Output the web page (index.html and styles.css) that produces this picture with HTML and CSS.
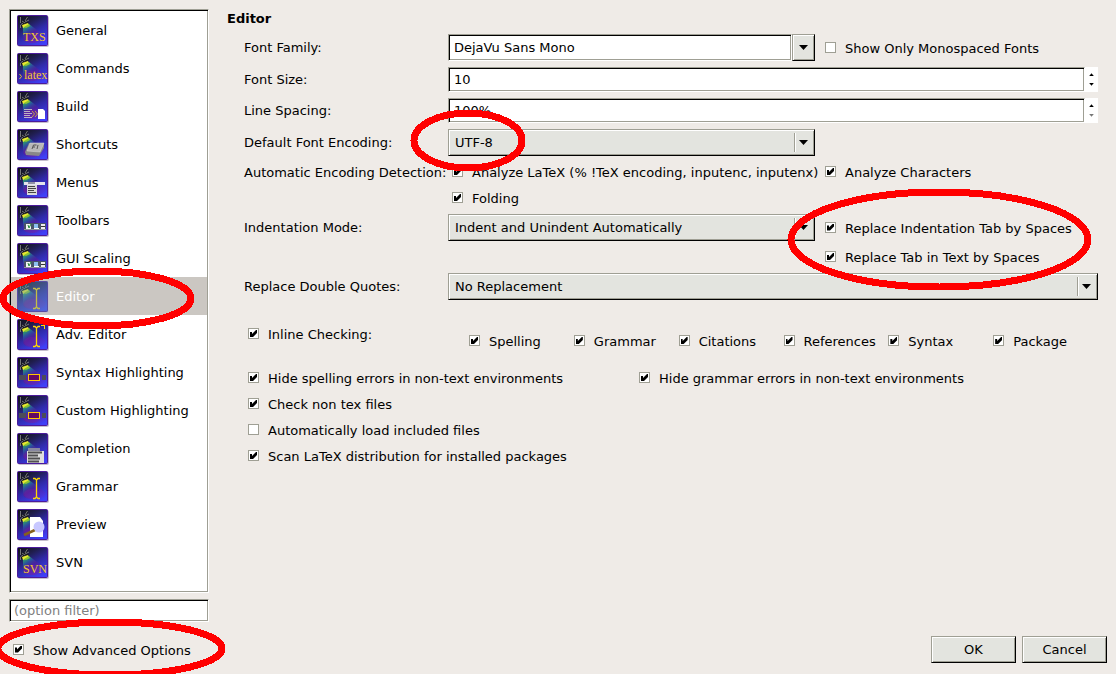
FILE: index.html
```html
<!DOCTYPE html>
<html lang="en">
<head>
<meta charset="utf-8">
<title>Configure Editor</title>
<link rel="stylesheet" href="styles.css">
</head>
<body>
<svg class="defs" aria-hidden="true">
  <defs>
    <linearGradient id="night" x1="0.2" y1="0" x2="0.75" y2="1">
      <stop offset="0" stop-color="#141420"/>
      <stop offset="0.25" stop-color="#201e50"/>
      <stop offset="0.55" stop-color="#2f2aa8"/>
      <stop offset="1" stop-color="#4040f8"/>
    </linearGradient>
    <linearGradient id="beam" x1="0" y1="0" x2="0.8" y2="1">
      <stop offset="0" stop-color="#d8e820"/>
      <stop offset="0.14" stop-color="#2e9a68"/>
      <stop offset="0.3" stop-color="#2a50a0"/>
      <stop offset="0.5" stop-color="#5a1a98" stop-opacity="0.6"/>
      <stop offset="1" stop-color="#6a2ad0" stop-opacity="0.2"/>
    </linearGradient>
    <symbol id="stage" viewBox="0 0 32 32">
      <rect x="1" y="1" width="31" height="31" rx="2" fill="#c4bfcc"/>
      <rect x="0.5" y="0.5" width="30" height="30" rx="1" fill="url(#night)" stroke="#4b1a9c"/>
      <path d="M6 12 L12 9 L29 22 Q28 29 15 28 Q6 28 6 23 Z" fill="url(#beam)"/>
      <ellipse cx="15" cy="23" rx="8" ry="5" fill="#78209c" opacity="0.4"/>
      <path d="M3 2 L5 6 L8 5 L9 1 L11 2 L10 6 L12 8 L6 12 L3 12 L5 8 L3 6 Z" fill="#17171b"/>
      <path d="M3.500 2v6 M5 6l3 2 M10.500 2L8 6 M3.500 13V10L6 8 M8 7l4-2" stroke="#74747c" fill="none"/>
      <path d="M5 10 L11 8 L12 10 L6 13 Z" fill="#e8e830"/>
      <path d="M7 12 L12 9 L13 11 L9 13 Z" fill="#8bc430"/>
    </symbol>
    <symbol id="toolbar-glyph" viewBox="0 0 32 32">
      <rect x="7" y="18" width="22" height="7" fill="#485468"/>
      <path d="M7 24.500h22" stroke="#8a929c"/>
      <rect x="9" y="19" width="5" height="5" fill="#f4f4f4"/>
      <path d="M11 20l1 3 2-4" stroke="#228a38" fill="none"/>
      <rect x="17" y="19" width="4" height="4" fill="#8cc0f0"/>
      <path d="M17 23.500h5" stroke="#fff"/>
      <rect x="24" y="19" width="4" height="5" fill="#eee"/>
      <path d="M24 21.500h4" stroke="#333"/>
    </symbol>
    <symbol id="cursor-glyph" viewBox="0 0 32 32">
      <path d="M16 7.500h2l1.500 1.500 1.500-1.500h2M19.500 9v17M16 27.500h2l1.500-1.500 1.500 1.500h2" fill="none" stroke="#ffd800" stroke-width="1.300"/>
    </symbol>
    <symbol id="highlight-glyph" viewBox="0 0 32 32">
      <rect x="2" y="18" width="7" height="5" fill="#4c4c58"/>
      <rect x="25" y="18" width="4" height="5" fill="#4c4c58"/>
      <rect x="11.500" y="17.500" width="11" height="6" fill="#640a64" stroke="#ffc800"/>
    </symbol>
  </defs>
</svg>

<form class="dialog">
  <nav class="categories sunken" aria-label="Categories">
    <ul>
      <li><button type="button"><svg class="icon" viewBox="0 0 32 32"><use href="#stage"/><text x="6" y="26">TXS</text></svg>General</button></li>
      <li><button type="button"><svg class="icon" viewBox="0 0 32 32"><use href="#stage"/><path d="M2.500 21l2 2.500-2 2.500" stroke="#e8c030" fill="none"/><text x="7" y="26">latex</text></svg>Commands</button></li>
      <li><button type="button"><svg class="icon" viewBox="0 0 32 32"><use href="#stage"/><path d="M7 18.500h8M7 20.500h6M7 22.500h8M7 24.500h6M7 26.500h8" stroke="#bab4c4"/><path d="M15 20l2.500 3-2.500 3M18 20l2.500 3-2.500 3" stroke="#c8a040" fill="none"/><path d="M21 18h5l2 2v8h-7z" fill="#fff"/></svg>Build</button></li>
      <li><button type="button"><svg class="icon" viewBox="0 0 32 32"><use href="#stage"/><path d="M12 14h15v5l-5 8-13-1-1-3z" fill="#888"/><path d="M13 14h14l-4 9-13-1z" fill="#b8b8b8" stroke="#d8d8d8" stroke-width="0.500"/><path d="M15 20l1.500-4h3M16 18h2M20 20l1-4" stroke="#555" fill="none"/></svg>Shortcuts</button></li>
      <li><button type="button"><svg class="icon" viewBox="0 0 32 32"><use href="#stage"/><path d="M7 15h21v3h-21z" fill="#e4e4ec"/><path d="M11 15h7v2h-7z" fill="#9090a4"/><path d="M10 18h10v10h-10z" fill="#d8d8d8"/><path d="M11 19.500h7M11 21.500h8M11 23.500h6M11 25.500h8" stroke="#444"/></svg>Menus</button></li>
      <li><button type="button"><svg class="icon" viewBox="0 0 32 32"><use href="#stage"/><use href="#toolbar-glyph"/></svg>Toolbars</button></li>
      <li><button type="button"><svg class="icon" viewBox="0 0 32 32"><use href="#stage"/><use href="#toolbar-glyph"/></svg>GUI Scaling</button></li>
      <li><button type="button" class="selected" aria-current="page"><svg class="icon" viewBox="0 0 32 32"><use href="#stage"/><use href="#cursor-glyph"/><rect width="31" height="31" fill="#6c9cb0" opacity="0.4"/></svg>Editor</button></li>
      <li><button type="button"><svg class="icon" viewBox="0 0 32 32"><use href="#stage"/><use href="#cursor-glyph"/><path d="M27.500 4v6M24 6.500h4" stroke="#ffd800"/></svg>Adv. Editor</button></li>
      <li><button type="button"><svg class="icon" viewBox="0 0 32 32"><use href="#stage"/><use href="#highlight-glyph"/></svg>Syntax Highlighting</button></li>
      <li><button type="button"><svg class="icon" viewBox="0 0 32 32"><use href="#stage"/><use href="#highlight-glyph"/></svg>Custom Highlighting</button></li>
      <li><button type="button"><svg class="icon" viewBox="0 0 32 32"><use href="#stage"/><path d="M11 15h12v3h-12z" fill="#8888a0"/><path d="M10 18h17v12h-17z" fill="#dedede"/><path d="M11 19.500h14M11 22.500h10M11 25.500h12M11 28.500h11" stroke="#505050" stroke-width="2"/></svg>Completion</button></li>
      <li><button type="button"><svg class="icon" viewBox="0 0 32 32"><use href="#stage"/><use href="#cursor-glyph"/></svg>Grammar</button></li>
      <li><button type="button"><svg class="icon" viewBox="0 0 32 32"><use href="#stage"/><path d="M13 8h10l3 4v16h-13z" fill="#fff"/><path d="M7 26l11-5" stroke="#85601c" stroke-width="2.500"/><circle cx="22" cy="18" r="5.500" fill="#c8c8ff"/></svg>Preview</button></li>
      <li><button type="button"><svg class="icon" viewBox="0 0 32 32"><use href="#stage"/><text x="6" y="26">SVN</text></svg>SVN</button></li>
    </ul>
  </nav>
  <input class="filter sunken" type="text" placeholder="(option filter)" aria-label="Option filter">

  <main class="panel">
    <h1>Editor</h1>
    <div class="settings">
      <label for="family">Font Family:</label>
      <div class="combo">
        <input id="family" class="field sunken" type="text" value="DejaVu Sans Mono">
        <button type="button" class="drop raised" aria-label="Choose font"><span class="arrow"></span></button>
      </div>
      <label class="check"><input type="checkbox">Show Only Monospaced Fonts</label>

      <label for="size">Font Size:</label>
      <div class="spin wide">
        <input id="size" class="field sunken" type="text" value="10">
        <div class="steps"><button type="button" class="up" aria-label="Increase size"></button><button type="button" class="down" aria-label="Decrease size"></button></div>
      </div>

      <label for="spacing">Line Spacing:</label>
      <div class="spin wide">
        <input id="spacing" class="field sunken" type="text" value="100%">
        <div class="steps"><button type="button" class="up" aria-label="Increase spacing"></button><button type="button" class="down" aria-label="Decrease spacing" disabled></button></div>
      </div>

      <label for="encoding">Default Font Encoding:</label>
      <div class="select"><select id="encoding" class="raised"><option>UTF-8</option></select><span class="arrow"></span></div>
      <span></span>

      <span class="caption">Automatic Encoding Detection:</span>
      <label class="check indent"><input type="checkbox" checked>Analyze LaTeX (% !TeX encoding, inputenc, inputenx)</label>
      <label class="check"><input type="checkbox" checked>Analyze Characters</label>

      <label class="check indent second"><input type="checkbox" checked>Folding</label>

      <label class="from-start" for="indentation">Indentation Mode:</label>
      <div class="select"><select id="indentation" class="raised"><option>Indent and Unindent Automatically</option></select><span class="arrow"></span></div>
      <label class="check"><input type="checkbox" checked>Replace Indentation Tab by Spaces</label>

      <label class="check third"><input type="checkbox" checked>Replace Tab in Text by Spaces</label>

      <label for="quotes">Replace Double Quotes:</label>
      <div class="select wide"><select id="quotes" class="raised"><option>No Replacement</option></select><span class="arrow"></span></div>
    </div>

    <div class="inline-checks">
      <label class="check"><input type="checkbox" checked>Inline Checking:</label>
      <div class="kinds">
        <label class="check"><input type="checkbox" checked>Spelling</label>
        <label class="check"><input type="checkbox" checked>Grammar</label>
        <label class="check"><input type="checkbox" checked>Citations</label>
        <label class="check"><input type="checkbox" checked>References</label>
        <label class="check"><input type="checkbox" checked>Syntax</label>
        <label class="check"><input type="checkbox" checked>Package</label>
      </div>
    </div>

    <div class="extras">
      <label class="check"><input type="checkbox" checked>Hide spelling errors in non-text environments</label>
      <label class="check"><input type="checkbox" checked>Hide grammar errors in non-text environments</label>
      <label class="check full"><input type="checkbox" checked>Check non tex files</label>
      <label class="check full"><input type="checkbox">Automatically load included files</label>
      <label class="check full"><input type="checkbox" checked>Scan LaTeX distribution for installed packages</label>
    </div>
  </main>

  <footer class="actions">
    <label class="check"><input type="checkbox" checked>Show Advanced Options</label>
    <button type="submit" class="push raised">OK</button>
    <button type="button" class="push raised">Cancel</button>
  </footer>
</form>

<svg class="marks" aria-hidden="true">
  <ellipse cx="468" cy="140.500" rx="54" ry="27.500"/>
  <ellipse cx="939.500" cy="239.500" rx="148.500" ry="47.500"/>
  <ellipse cx="97" cy="298.500" rx="94" ry="27.500"/>
  <ellipse cx="110" cy="648.500" rx="112" ry="26.500"/>
</svg>
</body>
</html>
```
FILE: styles.css
```css
* { box-sizing: border-box; }

body {
  margin: 0;
  position: relative;
  background: #efebe7;
  color: #000;
  font: 13px/20px "DejaVu Sans", sans-serif;
}

input, select, button { font: inherit; color: inherit; outline: 0; border-radius: 0; }

.defs { position: absolute; width: 0; height: 0; }

.sunken {
  background: #fff;
  border: 1px solid;
  border-color: #9f9f94 #fff #fff #9f9f94;
  box-shadow: inset 1px 1px #000, inset -1px -1px #9f9f94;
}

.raised {
  background: #e3e4df;
  border: 1px solid;
  border-color: #9f9f94 #000 #000 #9f9f94;
  box-shadow: inset 1px 1px #fff, inset -1px -1px #9f9f94;
}

.dialog {
  min-height: 100vh;
  padding: 9px 9px 11px;
  display: grid;
  grid-template-columns: 200px 1fr;
  grid-template-rows: 1fr auto auto;
  column-gap: 18px;
}

.categories { padding: 1px; }
.categories ul { list-style: none; margin: 0; padding: 0; }
.categories button {
  display: flex;
  align-items: center;
  gap: 7px;
  width: 100%;
  height: 38px;
  padding: 2px 6px 0;
  border: 0;
  background: none;
  text-align: left;
}
.categories .selected { background: #cbc7c2; color: #fff; }

.icon { width: 32px; height: 32px; flex: none; }
.icon text { font: 12px "Liberation Serif", serif; fill: #f0c830; }

.filter { grid-row: 2; height: 23px; margin-top: 6px; padding: 0 4px; min-width: 0; }
.filter::placeholder { color: #808080; opacity: 1; }

.panel { grid-column: 2; grid-row: 1 / 3; padding-right: 9px; }
.panel h1 { margin: 0; padding: 1px 0 6px; font-size: 13px; line-height: 18px; }

.settings {
  margin-left: 17px;
  display: grid;
  grid-template-columns: 194px minmax(0, 367fr) minmax(0, 273fr);
  column-gap: 10px;
  row-gap: 6px;
  align-items: center;
}
.settings > label, .settings > span { white-space: nowrap; }
.caption { line-height: 19px; padding-top: 1px; }
.wide { grid-column: 2 / 4; }
.second { grid-column: 2; }
.third { grid-column: 3; }
.from-start { grid-column: 1; }

.combo, .spin { display: flex; }
.combo { height: 27px; }
.spin { height: 25px; }
.field { flex: 1; min-width: 0; padding: 0 5px; }
.drop { width: 23px; padding: 0; display: flex; align-items: center; justify-content: center; }

.arrow { width: 9px; height: 5px; background: #000; clip-path: polygon(0 0, 100% 0, 50% 100%); }

.steps { width: 13px; background: #fff; display: flex; flex-direction: column; justify-content: space-evenly; align-items: center; }
.steps button { width: 5px; height: 3px; padding: 0; border: 0; background: #000; }
.steps .up { clip-path: polygon(50% 0, 100% 100%, 0 100%); }
.steps .down { clip-path: polygon(0 0, 100% 0, 50% 100%); }
.steps button:disabled { background: #777; }

.select { position: relative; }
.select select { display: block; appearance: none; width: 100%; height: 27px; padding: 0 26px 0 6px; }
.select::after {
  content: "";
  position: absolute;
  right: 19px;
  top: 4px;
  bottom: 4px;
  width: 2px;
  background: linear-gradient(to right, #9f9f94 50%, #fff 50%);
}
.select .arrow { position: absolute; right: 7px; top: 11px; }

.check { display: flex; align-items: center; gap: 9px; padding-top: 1px; line-height: 19px; white-space: nowrap; }
.check input {
  appearance: none;
  flex: none;
  width: 11px;
  height: 11px;
  margin: 0 0 2px;
  background: #fff;
  border: 1px solid #9f9f94;
}
.check input:checked::before {
  content: "";
  display: block;
  width: 7px;
  height: 7px;
  margin: 1px;
  background: #000;
  clip-path: polygon(0 2px, 2px 2px, 2px 4px, 6px 0, 7px 0, 7px 3px, 3px 7px, 0 7px);
}
.indent { padding-left: 4px; }

.inline-checks {
  margin: 24px 0 0 21px;
  display: grid;
  grid-template-columns: 221px 1fr;
  align-items: start;
}
.kinds { padding-top: 7px; display: grid; grid-template-columns: repeat(6, 1fr); }

.extras {
  margin: 17px 0 0 21px;
  display: grid;
  grid-template-columns: 391fr 459fr;
  row-gap: 6px;
}
.full { grid-column: 1 / 3; }

.actions { grid-column: 1 / 3; margin-top: 14px; display: flex; gap: 6px; }
.actions .check { margin-right: auto; padding-left: 4px; }
.push { width: 85px; height: 27px; padding: 0; }

.marks { position: absolute; top: 0; left: 0; width: 100%; height: 100%; pointer-events: none; overflow: hidden; }
.marks ellipse { fill: none; stroke: #f00; stroke-width: 7px; shape-rendering: crispEdges; }
```
